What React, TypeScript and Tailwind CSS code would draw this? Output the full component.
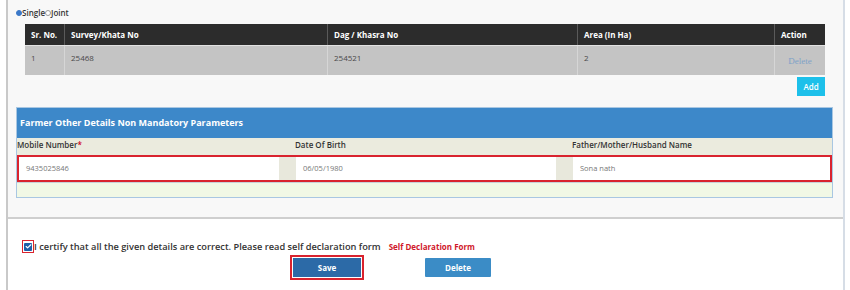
import { Check } from 'lucide-react';

const font = { fontFamily: '"Open Sans", "Noto Sans", sans-serif' };

function Radio({ checked }: { checked?: boolean }) {
  return (
    <span
      className={`inline-block h-[6px] w-[6px] rounded-full border ${
        checked ? 'border-[#3b78c8] bg-[#3b78c8]' : 'border-[#9a9a9a] bg-white'
      }`}
    />
  );
}

function LandTable() {
  const cols = [
    { label: 'Sr. No.', w: 'w-[40px]', value: '1' },
    { label: 'Survey/Khata No', w: 'w-[263px]', value: '25468' },
    { label: 'Dag / Khasra No', w: 'w-[250px]', value: '254521' },
    { label: 'Area (In Ha)', w: 'w-[197px]', value: '2' },
  ];
  return (
    <div className="ml-[17px] w-[800px] text-[8px]">
      <div className="flex h-[21px] bg-[#2c2c2c] font-bold text-white">
        {cols.map((c) => (
          <div key={c.label} className={`${c.w} flex shrink-0 items-center border-r border-[#5a5a5a] px-[6px]`}>
            {c.label}
          </div>
        ))}
        <div className="flex flex-1 items-center px-[6px]">Action</div>
      </div>
      <div className="flex h-[30px] border-t border-[#e2e2e2] bg-[#c4c4c4] text-[#4a4a4a]">
        {cols.map((c) => (
          <div key={c.label} className={`${c.w} shrink-0 border-r border-[#d6d6d6] px-[6px] pt-[6px]`}>
            {c.value}
          </div>
        ))}
        <div
          className="flex flex-1 items-center justify-center pt-[2px] text-[9px] text-[#7ea2c8]"
          style={{ fontFamily: '"Liberation Serif", serif' }}
        >
          Delete
        </div>
      </div>
    </div>
  );
}

function OtherDetails() {
  const fields = [
    { label: 'Mobile Number', value: '9435025846', required: true },
    { label: 'Date Of Birth', value: '06/05/1980' },
    { label: 'Father/Mother/Husband Name', value: 'Sona nath' },
  ];
  return (
    <div className="ml-[8px] w-[817px] border border-[#a9c7e2] bg-[#f1f8e5]">
      <div className="flex h-[30px] items-center bg-[#3d88c9] px-[3px] text-[9px] font-bold text-white">
        Farmer Other Details Non Mandatory Parameters
      </div>
      <div className="flex h-[14px] items-center bg-[#ebebde] text-[8px] font-semibold text-[#333]">
        <div className="w-[278px] shrink-0">
          {fields[0].label}
          <span className="text-[#d0021b]">*</span>
        </div>
        <div className="w-[277px] shrink-0">{fields[1].label}</div>
        <div className="flex-1">{fields[2].label}</div>
      </div>
      <div className="h-[3px] bg-[#ebebde]" />
      <div className="flex h-[27px] border-2 border-[#d9232e] bg-[#e8e8dc] text-[7.5px] text-[#777]">
        <div className="flex w-[260px] shrink-0 items-center bg-white pl-[7px]">{fields[0].value}</div>
        <div className="w-[17px] shrink-0" />
        <div className="flex w-[260px] shrink-0 items-center bg-white pl-[7px]">{fields[1].value}</div>
        <div className="w-[17px] shrink-0" />
        <div className="flex flex-1 items-center bg-white pl-[7px]">{fields[2].value}</div>
      </div>
      <div className="h-[15px] border-t border-[#c8d2d8]" />
    </div>
  );
}

export default function App() {
  return (
    <div className="h-[290px] w-[850px] overflow-hidden bg-white" style={font}>
      <div className="ml-[6px] h-[290px] w-[839px] border-l-2 border-r-2 border-l-[#c9c9c9] border-r-[#d6dde6]">
        {/* Land details section */}
        <div className="h-[219px] border-b-2 border-[#cfcfcf] bg-[#f8f8f8] pt-[6px]">
          <div className="flex h-[13px] items-center pl-[8px] text-[8px] font-semibold text-[#333]">
            <Radio checked />
            <span>Single</span>
            <Radio />
            <span>Joint</span>
          </div>
          <div className="mt-[5px]">
            <LandTable />
          </div>
          <div className="flex justify-end pr-[18px] pt-[2px]">
            <button className="h-[19px] w-[28px] bg-[#1dc0ea] text-[8px] font-semibold text-white">Add</button>
          </div>
          <div className="mt-[11px]">
            <OtherDetails />
          </div>
        </div>

        {/* Declaration */}
        <div className="flex h-[13px] items-center pl-[14px] mt-[21px]">
          <span className="flex h-[13px] w-[12px] items-center justify-center border border-[#d9232e]">
            <span className="flex h-[8px] w-[8px] items-center justify-center rounded-[1px] bg-[#1f5fa8]">
              <Check className="h-[7px] w-[7px] text-white" strokeWidth={4} />
            </span>
          </span>
          <span className="text-[9.25px] font-semibold text-[#333]">
            I certify that all the given details are correct. Please read self declaration form
          </span>
          <span className="ml-[8px] text-[8px] font-bold text-[#d0182b]">Self Declaration Form</span>
        </div>
        <div className="mt-[2px] flex items-center">
          <div className="ml-[282px] border-2 border-[#d9232e] p-[1px]">
            <button className="block h-[19px] w-[68px] bg-[#2c6aa7] text-[8px] font-bold text-white">Save</button>
          </div>
          <button className="ml-[61px] h-[19px] w-[66px] rounded-[1px] bg-[#3b8cc6] text-[8px] font-bold text-white">
            Delete
          </button>
        </div>
      </div>
    </div>
  );
}
